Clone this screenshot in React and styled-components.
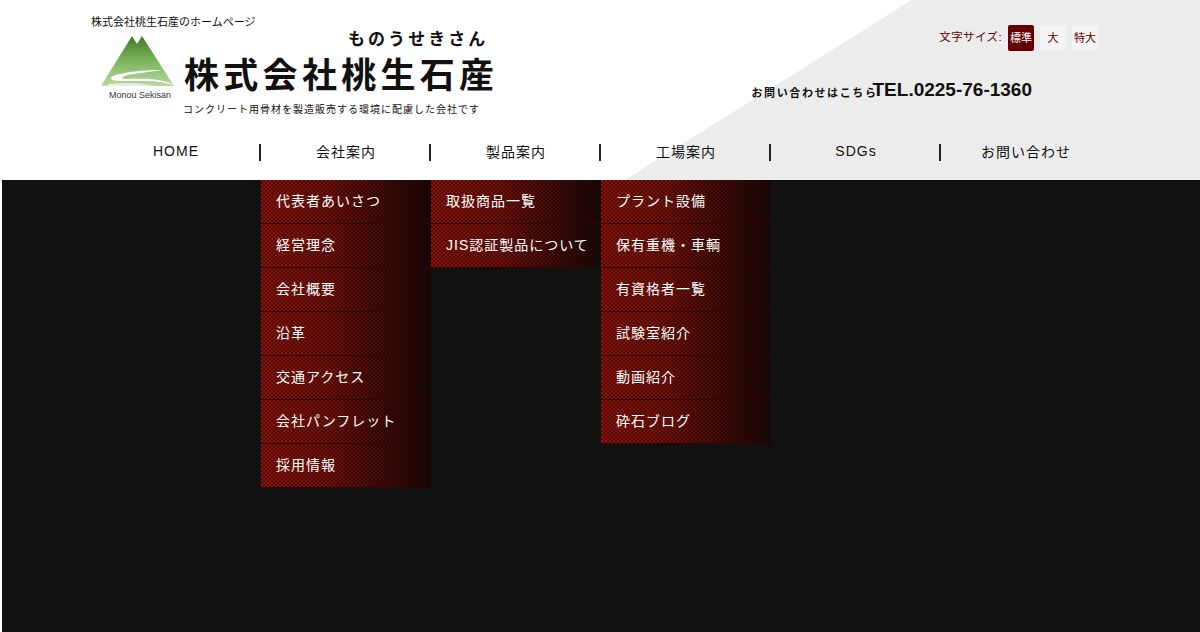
import React from "react";
import styled, { createGlobalStyle } from "styled-components";

const GlobalStyle = createGlobalStyle`
  html, body {
    margin: 0;
    padding: 0;
    height: 100%;
    overflow: hidden;
    background: #fff;
    font-family: "Liberation Sans", "Noto Sans CJK JP", sans-serif;
    color: #111;
  }
`;

const Header = styled.header`
  height: 180px;
  background: linear-gradient(147.9deg, #fff 484px, #ececec 485px);
`;

const HeaderInner = styled.div`
  width: 1020px;
  margin-left: 91px;
`;

const TopRow = styled.div`
  display: flex;
  justify-content: space-between;
  height: 130px;
`;

const Brand = styled.div`
  padding-top: 16px;
`;

const Tagline = styled.h1`
  margin: 0;
  font-size: 11px;
  line-height: 13px;
  font-weight: 400;
`;

const BrandRow = styled.div`
  display: flex;
  margin: -1px 0 0 9px;
`;

const Logo = styled.div`
  width: 83px;
  display: flex;
  flex-direction: column;
  align-items: flex-start;
  padding-top: 6px;
`;

const LogoCaption = styled.span`
  font-size: 9px;
  line-height: 10px;
  margin: 2px 0 0 9px;
  color: #333;
  white-space: nowrap;
`;

const Names = styled.div`
  display: flex;
  flex-direction: column;
`;

const Kana = styled.div`
  font-size: 17px;
  line-height: 22px;
  font-weight: 700;
  letter-spacing: 3.05px;
  margin: 1px 0 0 165px;
  white-space: nowrap;
`;

const CompanyName = styled.div`
  font-size: 35px;
  line-height: 44px;
  font-weight: 700;
  letter-spacing: 4.3px;
  white-space: nowrap;
  margin: 3px 0 0 1px;
`;

const Lead = styled.p`
  margin: 5px 0 0;
  font-size: 10px;
  line-height: 14px;
  letter-spacing: 1px;
  white-space: nowrap;
`;

const Side = styled.div`
  display: flex;
  flex-direction: column;
  align-items: flex-end;
  padding: 25px 13px 0 0;
`;

const SizeSwitch = styled.div`
  display: flex;
  align-items: center;
  gap: 6px;
`;

const SizeLabel = styled.span`
  font-size: 11.5px;
  letter-spacing: 0.4px;
  color: #5a0000;
  margin-top: -4px;
`;

const SizeButton = styled.button`
  width: 26px;
  height: 26px;
  padding: 0 0 2px;
  border: 0;
  border-radius: 2px;
  font: inherit;
  font-size: 11px;
  color: ${(props) => (props.$active ? "#fff" : "#5a0000")};
  background: ${(props) => (props.$active ? "#650000" : "#f3f3f3")};
`;

const Contact = styled.div`
  display: flex;
  align-items: center;
  margin: 27px 66px 0 0;
`;

const ContactLabel = styled.span`
  width: 121px;
  font-size: 11px;
  font-weight: 700;
  letter-spacing: 1.6px;
  white-space: nowrap;
  margin-top: 3px;
`;

const Tel = styled.span`
  font-size: 19px;
  line-height: 24px;
  font-weight: 700;
  white-space: nowrap;
`;

const Nav = styled.nav`
  display: grid;
  grid-template-columns: repeat(6, 170px);
  height: 50px;
`;

const NavItem = styled.div`
  position: relative;
  display: flex;
  align-items: center;
  justify-content: center;
  font-size: 14px;
  letter-spacing: 1px;
  padding-bottom: 9px;
  box-sizing: border-box;

  &:not(:last-child)::after {
    content: "";
    position: absolute;
    right: 0;
    top: 14px;
    width: 2px;
    height: 17px;
    background: #222;
  }
`;

const SubMenu = styled.ul`
  position: absolute;
  left: 0;
  top: 50px;
  width: 170px;
  margin: 0;
  padding: 0;
  list-style: none;
`;

const SubItem = styled.li`
  height: 44px;
  box-sizing: border-box;
  padding: 0 0 3px 15px;
  display: flex;
  align-items: center;
  font-size: 14px;
  letter-spacing: 1px;
  color: #fff;
  white-space: nowrap;
  border-bottom: 1px solid #2e0604;
  background:
    repeating-conic-gradient(rgba(20, 2, 2, 0.5) 0 25%, transparent 0 50%) 0 0 / 4px 4px,
    linear-gradient(90deg, #8e1409 0%, #741109 40%, #420b08 72%, #180806 100%);
`;

const Main = styled.main`
  height: 452px;
  margin-left: 2px;
  background: #111;
`;

const menu = [
  { label: "HOME" },
  {
    label: "会社案内",
    items: ["代表者あいさつ", "経営理念", "会社概要", "沿革", "交通アクセス", "会社パンフレット", "採用情報"],
  },
  { label: "製品案内", items: ["取扱商品一覧", "JIS認証製品について"] },
  {
    label: "工場案内",
    items: ["プラント設備", "保有重機・車輌", "有資格者一覧", "試験室紹介", "動画紹介", "砕石ブログ"],
  },
  { label: "SDGs" },
  { label: "お問い合わせ" },
];

const MountainLogo = () => (
  <svg width="76" height="54" viewBox="0 0 76 54">
    <defs>
      <linearGradient id="mountain" x1="0" y1="0" x2="0" y2="1">
        <stop offset="0" stopColor="#3f7a2a" />
        <stop offset="0.5" stopColor="#7db55c" />
        <stop offset="1" stopColor="#b9d8a2" />
      </linearGradient>
    </defs>
    <path d="M1 52 L32 2 L37 10 L42 2 L74 52 Z" fill="url(#mountain)" />
    <path
      d="M62 36 C44 36 24 38 13 42 C8 45 12 47 24 47 C42 47 60 46 73 51 C66 45 44 44 28 45 C20 45 20 43 28 41 C38 39 50 38 62 36 Z"
      fill="#fff"
    />
    <path d="M9 50 C24 48 42 49 56 52 L7 52 Z" fill="#e6f1dc" />
  </svg>
);

const App = () => (
  <>
    <GlobalStyle />
    <Header>
      <HeaderInner>
        <TopRow>
          <Brand>
            <Tagline>株式会社桃生石産のホームページ</Tagline>
            <BrandRow>
              <Logo>
                <MountainLogo />
                <LogoCaption>Monou Sekisan</LogoCaption>
              </Logo>
              <Names>
                <Kana>ものうせきさん</Kana>
                <CompanyName>株式会社桃生石産</CompanyName>
                <Lead>コンクリート用骨材を製造販売する環境に配慮した会社です</Lead>
              </Names>
            </BrandRow>
          </Brand>
          <Side>
            <SizeSwitch>
              <SizeLabel>文字サイズ:</SizeLabel>
              <SizeButton $active>標準</SizeButton>
              <SizeButton>大</SizeButton>
              <SizeButton>特大</SizeButton>
            </SizeSwitch>
            <Contact>
              <ContactLabel>お問い合わせはこちら</ContactLabel>
              <Tel>TEL.0225-76-1360</Tel>
            </Contact>
          </Side>
        </TopRow>
        <Nav>
          {menu.map((entry) => (
            <NavItem key={entry.label}>
              {entry.label}
              {entry.items && (
                <SubMenu>
                  {entry.items.map((item) => (
                    <SubItem key={item}>{item}</SubItem>
                  ))}
                </SubMenu>
              )}
            </NavItem>
          ))}
        </Nav>
      </HeaderInner>
    </Header>
    <Main />
  </>
);

export default App;
